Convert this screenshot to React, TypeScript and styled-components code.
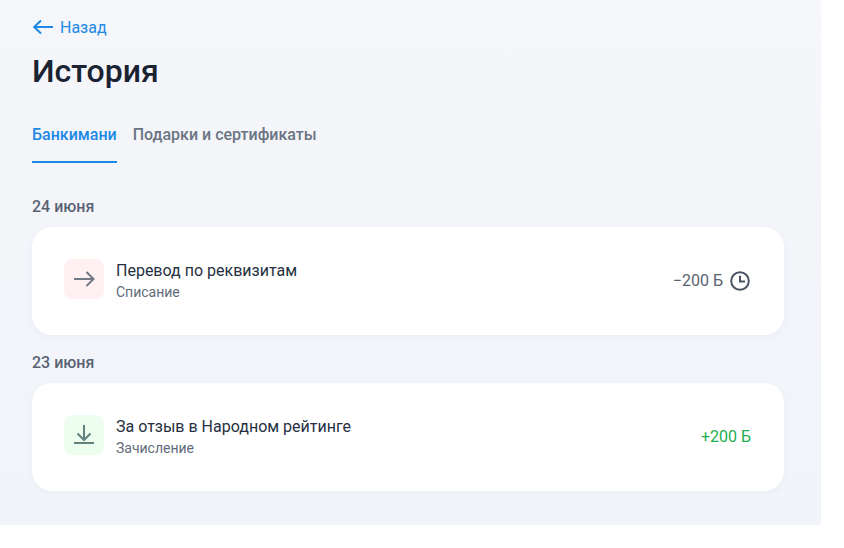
import React from 'react';
import styled, { createGlobalStyle } from 'styled-components';

const Global = createGlobalStyle`
  html, body { margin: 0; padding: 0; background: #ffffff; }
  body { font-family: Roboto, "Liberation Sans", sans-serif; }
`;

const Page = styled.main`
  width: 821px;
  height: 525px;
  box-sizing: border-box;
  padding: 16px 37px 0 32px;
  background: linear-gradient(180deg, #f5f6fa 0, #f1f4f9 100%);
`;

const Back = styled.a`
  display: flex;
  align-items: center;
  gap: 6px;
  height: 22px;
  color: #1e88e5;
  font-size: 16px;
  line-height: 22px;
`;

const BackLabel = styled.span`
  padding-top: 1px;
`;

const Title = styled.h1`
  margin: 13px 0 0;
  color: #1a2332;
  font-size: 32px;
  line-height: 40px;
  font-weight: 500;
`;

const Tabs = styled.nav`
  display: flex;
  gap: 16px;
  margin-top: 27px;
`;

const Tab = styled.div<{ $active?: boolean }>`
  height: 45px;
  box-sizing: border-box;
  padding-top: 6px;
  font-size: 16px;
  line-height: 22px;
  font-weight: 500;
  color: ${(p) => (p.$active ? '#1e88e5' : '#6b7483')};
  border-bottom: 2px solid ${(p) => (p.$active ? '#1e88e5' : 'transparent')};
`;

const DateLabel = styled.h2<{ $first?: boolean }>`
  margin: ${(p) => (p.$first ? '33px' : '17px')} 0 9px;
  color: #596273;
  font-size: 16px;
  line-height: 22px;
  font-weight: 500;
`;

const Card = styled.article`
  display: flex;
  align-items: center;
  justify-content: space-between;
  height: 108px;
  box-sizing: border-box;
  padding: 32px 33px 32px 32px;
  background: #ffffff;
  border-radius: 20px;
  box-shadow: 0 2px 6px rgba(90, 110, 150, 0.05);
`;

const Left = styled.div`
  display: flex;
  align-items: flex-start;
  gap: 12px;
  min-height: 44px;
`;

const IconBox = styled.div<{ $bg: string }>`
  display: flex;
  align-items: center;
  justify-content: center;
  width: 40px;
  height: 40px;
  border-radius: 8px;
  background: ${(p) => p.$bg};
`;

const Texts = styled.div`
  display: flex;
  flex-direction: column;
`;

const Name = styled.div`
  color: #263040;
  font-size: 16px;
  line-height: 24px;
`;

const Kind = styled.div`
  color: #626b7a;
  font-size: 14px;
  line-height: 18px;
`;

const Amount = styled.div<{ $green?: boolean }>`
  display: flex;
  align-items: center;
  gap: 4px;
  color: ${(p) => (p.$green ? '#1fae50' : '#596273')};
  font-size: 16px;
  line-height: 22px;
`;

export default function App() {
  return (
    <>
      <Global />
      <Page>
        <Back>
          <svg width="22" height="16" viewBox="0 0 22 16" fill="none" stroke="#1e88e5" strokeWidth="2">
            <path d="M21 8H2.5" />
            <path d="M9 1.5 2.2 8 9 14.5" />
          </svg>
          <BackLabel>Назад</BackLabel>
        </Back>
        <Title>История</Title>
        <Tabs>
          <Tab $active>Банкимани</Tab>
          <Tab>Подарки и сертификаты</Tab>
        </Tabs>

        <DateLabel $first>24 июня</DateLabel>
        <Card>
          <Left>
            <IconBox $bg="#fff0f2">
              <svg width="24" height="24" viewBox="0 0 24 24" fill="none" stroke="#717888" strokeWidth="2">
                <path d="M2 12h19.500" />
                <path d="M14.500 5l7 7-7 7" />
              </svg>
            </IconBox>
            <Texts>
              <Name>Перевод по реквизитам</Name>
              <Kind>Списание</Kind>
            </Texts>
          </Left>
          <Amount>
            −200 Б
            <svg width="24" height="24" viewBox="0 0 24 24" fill="none" stroke="#4b5463" strokeWidth="2">
              <circle cx="13" cy="12" r="8.800" />
              <path d="M13 6.800V12.600H18" />
            </svg>
          </Amount>
        </Card>

        <DateLabel>23 июня</DateLabel>
        <Card>
          <Left>
            <IconBox $bg="#edfdee">
              <svg width="24" height="24" viewBox="0 0 24 24" fill="none" stroke="#62807c" strokeWidth="2">
                <path d="M12 2v15" />
                <path d="M5.500 10.500 12 17l6.500-6.500" />
                <path d="M2 20h20" />
              </svg>
            </IconBox>
            <Texts>
              <Name>За отзыв в Народном рейтинге</Name>
              <Kind>Зачисление</Kind>
            </Texts>
          </Left>
          <Amount $green>+200 Б</Amount>
        </Card>
      </Page>
    </>
  );
}
